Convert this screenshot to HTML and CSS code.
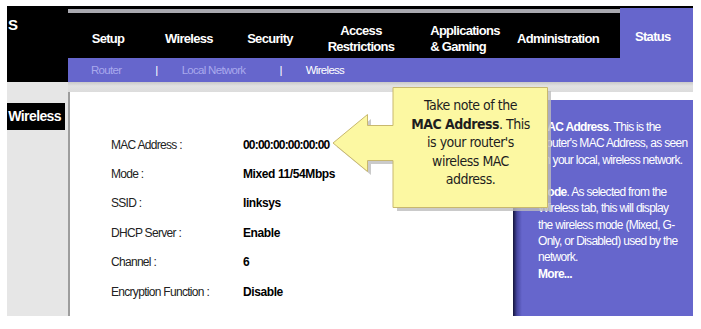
FILE: index.html
```html
<!doctype html>
<html lang="en">
<head>
	<meta charset="UTF-8" />
	<title>Status - Wireless</title>
<link rel="stylesheet" href="styles.css">
</head>
<body>
	<section class="page">
		<div class="brand">S</div>
		<div class="nav">
			<div class="tabs">
				<div class="tab-list">
					<a href="javascript:;" class="tab t-setup">Setup</a>
					<a href="javascript:;" class="tab t-wireless">Wireless</a>
					<a href="javascript:;" class="tab t-security">Security</a>
					<a href="javascript:;" class="tab t-access">Access<br/>Restrictions</a>
					<a href="javascript:;" class="tab t-apps"><span>Applications<br/>&amp; Gaming</span></a>
					<a href="javascript:;" class="tab t-admin">Administration</a>
				</div>
				<a href="javascript:;" class="tab-status">Status</a>
			</div>
			<div class="subnav">
				<a href="javascript:;">Router</a>
				<span class="sep">|</span>
				<a href="javascript:;">Local Network</a>
				<span class="sep">|</span>
				<a href="javascript:;" class="active">Wireless</a>
			</div>
		</div>

		<aside class="side">
			<div class="side-title">Wireless</div>
		</aside>

		<div class="main">
			<div class="band"></div>
			<div class="body">
				<div class="content">
					<div class="row"><span class="label">MAC Address :</span><span class="value mac">00:00:00:00:00:00</span></div>
					<div class="row"><span class="label">Mode :</span><span class="value">Mixed 11/54Mbps</span></div>
					<div class="row"><span class="label">SSID :</span><span class="value">linksys</span></div>
					<div class="row"><span class="label">DHCP Server :</span><span class="value">Enable</span></div>
					<div class="row"><span class="label">Channel :</span><span class="value">6</span></div>
					<div class="row"><span class="label">Encryption Function :</span><span class="value">Disable</span></div>
				</div>
				<div class="help">
					<p><b>MAC Address</b>. This is the<br/>Router's MAC Address, as seen<br/>on your local, wireless network.</p>
					<p><b>Mode</b>. As selected from the<br/>Wireless tab, this will display<br/>the wireless mode (Mixed, G-<br/>Only, or Disabled) used by the<br/>network.<br/><b>More...</b></p>
				</div>
			</div>
		</div>

		<!-- callout -->
		<div class="callout">
			<svg width="232" height="136" viewBox="0 0 232 136">
				<polygon class="shade" points="69,7 223,7 223,127 69,127 69,80 43,80 43,91 9,63 43,35 43,45 69,45"/>
				<polygon class="shape" points="65,3.5 219.5,3.5 219.5,123.5 65,123.5 65,76.5 39.5,76.5 39.5,87.5 5,59 39.5,30.5 39.5,41.5 65,41.5"/>
			</svg>
			<div class="callout-text">Take note of the<br/><b>MAC Address</b>. This<br/>is your router's<br/>wireless MAC<br/>address.</div>
		</div>
	</section>
</body>
</html>
```
FILE: styles.css
```css
body,p{
	margin: 0;
	padding: 0;
}
body{
	background: #fff;
	font-family: "Liberation Sans", Arial, sans-serif;
}
a{
	text-decoration: none;
}
.page{
	position: relative;
	width: 686px;
	height: 310px;
	margin: 6px 0 0 7px;
	display: grid;
	grid-template-columns: 61px 625px;
	grid-template-rows: 76px 234px;
	overflow: hidden;
}

/* header */
.brand{
	background: #000;
	color: #fff;
	font-size: 15px;
	font-weight: bold;
	padding: 10px 0 0 1px;
}
.nav{
	display: flex;
	flex-direction: column;
	min-height: 0;
}
.tabs{
	height: 52px;
	background: #000;
	display: flex;
}
.tab-list{
	flex: 1;
	display: flex;
	align-items: center;
	margin-top: 3px;
	border-top: 4px solid #a9a9b0;
	padding-top: 7px;
	padding-right: 14px;
}
.tab{
	color: #fff;
	font-size: 13px;
	font-weight: bold;
	letter-spacing: -0.7px;
	line-height: 16px;
	text-align: center;
	white-space: nowrap;
}
.t-setup{ width: 80px; }
.t-wireless{ width: 82px; }
.t-security{ width: 80px; }
.t-access{ width: 102px; }
.t-apps{ width: 98px; }
.t-apps span{
	display: inline-block;
	text-align: left;
	margin-left: 8px;
}
.t-admin{ width: 96px; }
.tab-status{
	width: 73px;
	margin-top: 2px;
	background: #6666cc;
	color: #fff;
	font-size: 13px;
	font-weight: bold;
	letter-spacing: -0.7px;
	padding: 21px 0 0 15px;
	box-sizing: border-box;
}
.subnav{
	height: 24px;
	background: #6666cc;
	display: flex;
	align-items: center;
	padding-left: 23px;
	font-size: 11.5px;
	letter-spacing: -0.7px;
}
.subnav a{
	color: #a9a9ec;
}
.subnav a.active{
	color: #fff;
}
.subnav .sep{
	color: #fff;
	margin: 0 24px 0 34px;
}

/* left column */
.side{
	background: #e6e6e6;
	padding-top: 21px;
}
.side-title{
	width: 58px;
	height: 27px;
	line-height: 27px;
	background: #000;
	color: #fff;
	font-size: 14px;
	font-weight: bold;
	letter-spacing: -0.6px;
	text-align: right;
	padding-right: 4px;
	box-sizing: border-box;
}

/* main */
.main{
	display: flex;
	flex-direction: column;
	min-height: 0;
}
.band{
	height: 10px;
	flex: none;
	background: linear-gradient(#c9c9c9, #e2e2e2 40%, #dcdcdc);
}
.body{
	flex: 1;
	display: flex;
	background: #fff;
	min-height: 0;
}
.content{
	flex: 1;
	border-left: 2px solid #9d9d9d;
	padding: 38px 0 0 41px;
}
.row{
	display: flex;
	align-items: center;
	height: 29.4px;
}
.label{
	width: 132px;
	font-size: 12px;
	letter-spacing: -0.7px;
	color: #222;
}
.value{
	font-size: 12px;
	font-weight: bold;
	letter-spacing: -0.4px;
	color: #000;
}
.value.mac{
	letter-spacing: -0.8px;
}
.help{
	width: 180px;
	margin-top: 8px;
	background: linear-gradient(to right, #14143a, #4646a0 4px, #6666cc 9px);
	color: #fff;
	font-size: 12px;
	letter-spacing: -0.7px;
	line-height: 16.3px;
	white-space: nowrap;
	padding: 19px 4px 0 25px;
	box-sizing: border-box;
}
.help p{
	margin-bottom: 16.3px;
}

/* callout */
.callout{
	position: absolute;
	left: 321px;
	top: 78px;
	width: 232px;
	height: 136px;
}
.callout svg{
	display: block;
}
.shade{
	fill: #bdbdbd;
	opacity: 0.8;
}
.shape{
	fill: #fcf8a2;
	stroke: #c8b86e;
	stroke-width: 1;
}
.callout-text{
	position: absolute;
	left: 65px;
	top: 3px;
	width: 155px;
	padding-top: 9px;
	text-align: center;
	font-family: "DejaVu Sans Condensed", "DejaVu Sans", sans-serif;
	font-size: 14px;
	letter-spacing: -0.5px;
	line-height: 18.5px;
	color: #1e1e1e;
}
```
